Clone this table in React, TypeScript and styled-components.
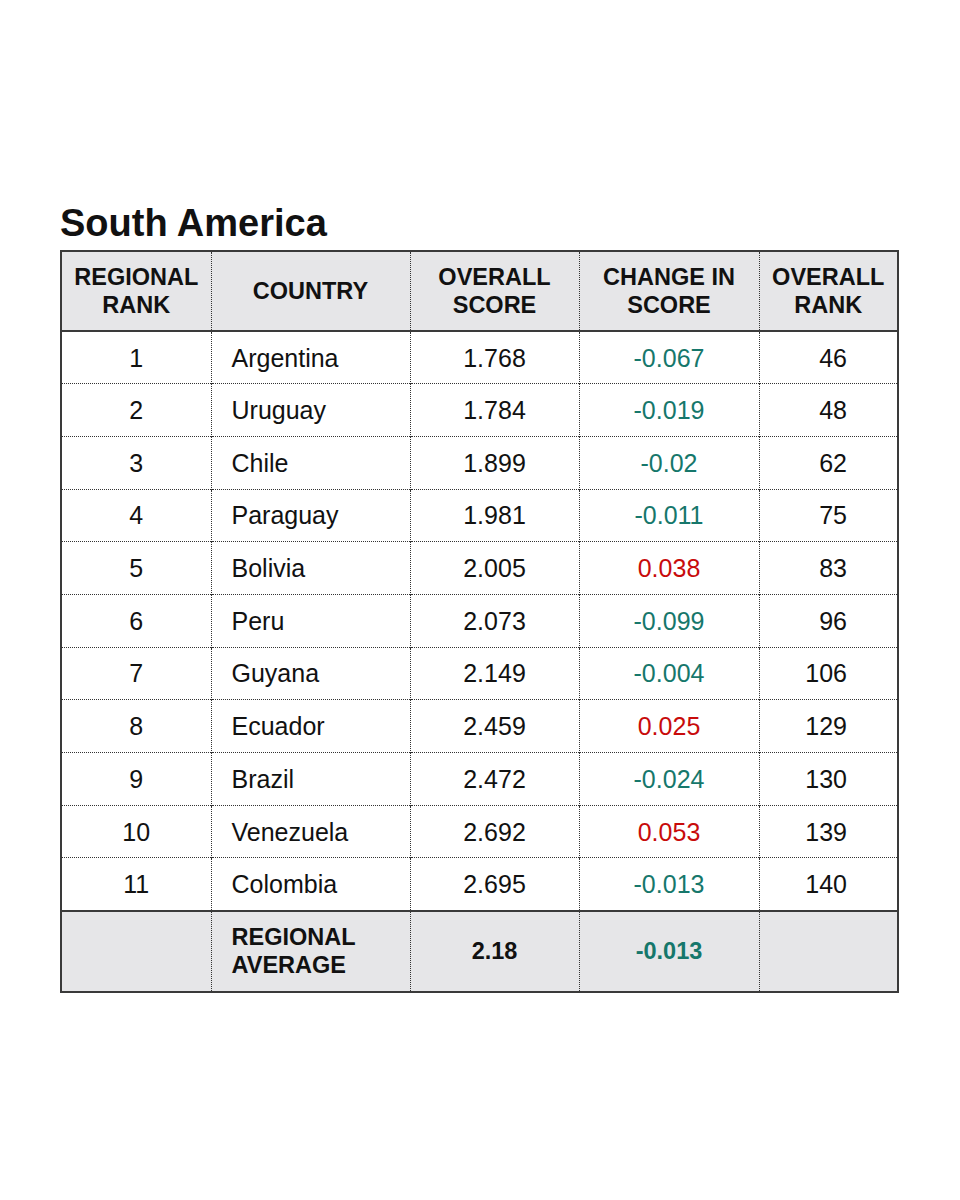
import React from "react";
import styled, { createGlobalStyle } from "styled-components";

const Global = createGlobalStyle`
  html, body { margin: 0; padding: 0; background: #fff; }
  body { font-family: "Liberation Sans", Arial, Helvetica, sans-serif; color: #111; }
`;

const Page = styled.div`
  padding: 202px 0 0 60px;
`;

const Title = styled.h1`
  margin: 0 0 5px 0;
  font-size: 38px;
  line-height: 43px;
  font-weight: 700;
  color: #111;
`;

const Table = styled.table`
  width: 837px;
  border-collapse: collapse;
  border: 2px solid #3a3a3a;
  table-layout: fixed;
`;

const HeadRow = styled.tr`
  height: 80px;
  background: #e6e6e8;
  border-bottom: 2px solid #3a3a3a;
`;

const BodyRow = styled.tr`
  height: 52.7px;
  & + & {
    border-top: 1px dotted #333;
  }
`;

const FootRow = styled.tr`
  height: 81px;
  background: #e6e6e8;
  border-top: 2px solid #3a3a3a;
`;

const HeadCell = styled.th`
  font-size: 23.5px;
  line-height: 28px;
  font-weight: 700;
  text-align: center;
  vertical-align: middle;
  padding: 0 2px;
  color: #111;
  & + & {
    border-left: 1px dotted #333;
  }
`;

type Tone = "plain" | "down" | "up";
type Align = "center" | "left" | "right";

const toneColor = (t?: Tone) =>
  t === "down" ? "#16776b" : t === "up" ? "#c80b0b" : "#111";

const Cell = styled.td<{ $align?: Align; $tone?: Tone; $bold?: boolean }>`
  font-size: ${(p) => (p.$bold ? "23.5px" : "25px")};
  line-height: 28px;
  font-weight: ${(p) => (p.$bold ? 700 : 400)};
  color: ${(p) => toneColor(p.$tone)};
  text-align: ${(p) => p.$align || "center"};
  padding: ${(p) =>
    p.$align === "left" ? "0 0 0 20px" : p.$align === "right" ? "0 50px 0 0" : "0"};
  vertical-align: middle;
  & + & {
    border-left: 1px dotted #333;
  }
`;

type Row = { rank: number; country: string; score: string; change: string; overall: number };

const rows: Row[] = [
  { rank: 1, country: "Argentina", score: "1.768", change: "-0.067", overall: 46 },
  { rank: 2, country: "Uruguay", score: "1.784", change: "-0.019", overall: 48 },
  { rank: 3, country: "Chile", score: "1.899", change: "-0.02", overall: 62 },
  { rank: 4, country: "Paraguay", score: "1.981", change: "-0.011", overall: 75 },
  { rank: 5, country: "Bolivia", score: "2.005", change: "0.038", overall: 83 },
  { rank: 6, country: "Peru", score: "2.073", change: "-0.099", overall: 96 },
  { rank: 7, country: "Guyana", score: "2.149", change: "-0.004", overall: 106 },
  { rank: 8, country: "Ecuador", score: "2.459", change: "0.025", overall: 129 },
  { rank: 9, country: "Brazil", score: "2.472", change: "-0.024", overall: 130 },
  { rank: 10, country: "Venezuela", score: "2.692", change: "0.053", overall: 139 },
  { rank: 11, country: "Colombia", score: "2.695", change: "-0.013", overall: 140 },
];

export default function App() {
  return (
    <>
      <Global />
      <Page>
        <Title>South America</Title>
        <Table>
          <colgroup>
            <col style={{ width: 150 }} />
            <col style={{ width: 199 }} />
            <col style={{ width: 169 }} />
            <col style={{ width: 180 }} />
            <col style={{ width: 139 }} />
          </colgroup>
          <thead>
            <HeadRow>
              <HeadCell>REGIONAL<br />RANK</HeadCell>
              <HeadCell>COUNTRY</HeadCell>
              <HeadCell>OVERALL<br />SCORE</HeadCell>
              <HeadCell>CHANGE IN<br />SCORE</HeadCell>
              <HeadCell>OVERALL<br />RANK</HeadCell>
            </HeadRow>
          </thead>
          <tbody>
            {rows.map((r) => (
              <BodyRow key={r.rank}>
                <Cell>{r.rank}</Cell>
                <Cell $align="left">{r.country}</Cell>
                <Cell>{r.score}</Cell>
                <Cell $tone={r.change.startsWith("-") ? "down" : "up"}>{r.change}</Cell>
                <Cell $align="right">{r.overall}</Cell>
              </BodyRow>
            ))}
          </tbody>
          <tfoot>
            <FootRow>
              <Cell />
              <Cell $align="left" $bold>REGIONAL<br />AVERAGE</Cell>
              <Cell $bold>2.18</Cell>
              <Cell $bold $tone="down">-0.013</Cell>
              <Cell />
            </FootRow>
          </tfoot>
        </Table>
      </Page>
    </>
  );
}
